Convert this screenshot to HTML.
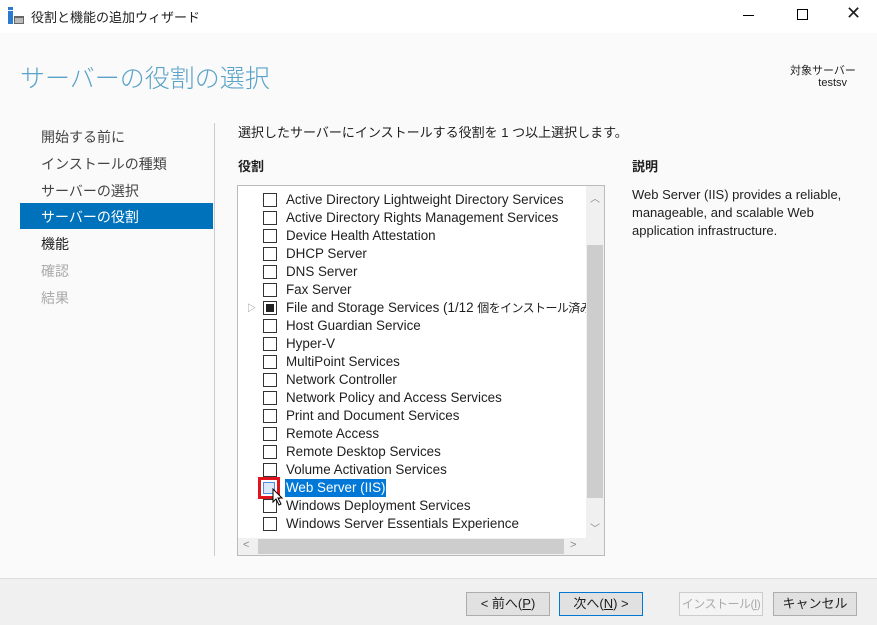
<!DOCTYPE html>
<html><head><meta charset="utf-8"><style>
*{margin:0;padding:0;box-sizing:border-box}
body{width:877px;height:625px;overflow:hidden;background:#fff;font-family:"Liberation Sans","Noto Sans CJK JP",sans-serif;font-size:13px;color:#1e1e1e;position:relative}
.a{position:absolute;white-space:nowrap}
.nav{position:absolute;left:41px;font-size:14px;color:#444;white-space:nowrap}
.row{position:absolute;left:286px;font-size:13.4px;color:#1e1e1e;white-space:nowrap}
.cb{position:absolute;left:263px;width:14px;height:14px;border:1px solid #333;background:#fff}
.btn{position:absolute;top:592px;height:24px;border:1px solid #adadad;background:#e1e1e1;font-size:13px;text-align:center;line-height:22px;white-space:nowrap;overflow:hidden}
</style></head><body>
<div class="a" style="left:0;top:0;width:877px;height:33px;background:#fff"></div>
<svg class="a" style="left:7px;top:7px" width="18" height="18"><rect x="1" y="0" width="5" height="3" fill="#2a7bd0"/><rect x="1" y="4" width="5" height="13" fill="#2a7bd0"/><rect x="7" y="9" width="10" height="8" fill="#666"/><rect x="8" y="11" width="8" height="5" fill="#bbb"/></svg>
<div class="a" style="left:31px;top:7px;font-size:13px">役割と機能の追加ウィザード</div>
<div class="a" style="left:743px;top:15px;width:11px;height:1px;background:#000"></div>
<div class="a" style="left:797px;top:9px;width:11px;height:11px;border:1px solid #000"></div>
<div class="a" style="left:846px;top:3px;font-size:18px">✕</div>
<div class="a" style="left:0;top:33px;width:877px;height:545px;background:#fafafa"></div>
<div class="a" style="left:20px;top:59px;font-size:25px;color:#5aa3c8;font-family:'Noto Sans CJK JP',sans-serif;font-weight:300">サーバーの役割の選択</div>
<div class="a" style="left:790px;top:62px;font-size:11px;text-align:right;width:57px">対象サーバー</div>
<div class="a" style="left:790px;top:77px;font-size:11px;text-align:right;width:57px">testsv</div>
<div class="nav" style="top:127px">開始する前に</div>
<div class="nav" style="top:154px">インストールの種類</div>
<div class="nav" style="top:181px">サーバーの選択</div>
<div class="a" style="left:20px;top:203px;width:193px;height:26px;background:#0072bc"></div>
<div class="nav" style="top:207px;color:#fff">サーバーの役割</div>
<div class="nav" style="top:234px;color:#222">機能</div>
<div class="nav" style="top:261px;color:#aaa">確認</div>
<div class="nav" style="top:288px;color:#aaa">結果</div>
<div class="a" style="left:214px;top:123px;width:1px;height:433px;background:#ccc"></div>
<div class="a" style="left:238px;top:122px;font-size:13px">選択したサーバーにインストールする役割を 1 つ以上選択します。</div>
<div class="a" style="left:238px;top:156px;font-size:13px;font-weight:bold">役割</div>
<div class="a" style="left:632px;top:156px;font-size:13px;font-weight:bold">説明</div>
<div class="a" style="left:632px;top:186px;font-size:13px;line-height:18px;white-space:normal;width:230px">Web Server (IIS) provides a reliable, manageable, and scalable Web application infrastructure.</div>
<div class="a" style="left:237px;top:185px;width:368px;height:371px;border:1px solid #bbb;background:#fff"></div>
<div class="a" style="left:586px;top:186px;width:18px;height:352px;background:#f0f0f0"></div>
<div class="a" style="left:587px;top:245px;width:16px;height:253px;background:#cdcdcd"></div>
<div class="a" style="left:590px;top:190px;font-size:10px;color:#888">︿</div>
<div class="a" style="left:590px;top:520px;font-size:10px;color:#888">﹀</div>
<div class="a" style="left:238px;top:538px;width:366px;height:17px;background:#f0f0f0"></div>
<div class="a" style="left:258px;top:539px;width:306px;height:15px;background:#cdcdcd"></div>
<div class="a" style="left:243px;top:539px;font-size:11px;color:#888">&lt;</div>
<div class="a" style="left:570px;top:539px;font-size:11px;color:#888">&gt;</div>
<div class="a" style="left:238px;top:186px;width:348px;height:345px;overflow:hidden">
<div style="position:relative;left:-238px;top:-186px">
<div class="cb" style="top:193px"></div><div class="row" style="top:192px">Active Directory Lightweight Directory Services</div>
<div class="cb" style="top:211px"></div><div class="row" style="top:210px">Active Directory Rights Management Services</div>
<div class="cb" style="top:229px"></div><div class="row" style="top:228px">Device Health Attestation</div>
<div class="cb" style="top:247px"></div><div class="row" style="top:246px">DHCP Server</div>
<div class="cb" style="top:265px"></div><div class="row" style="top:264px">DNS Server</div>
<div class="cb" style="top:283px"></div><div class="row" style="top:282px">Fax Server</div>
<div class="a" style="left:247px;top:301px;font-size:9px;color:#888">▷</div>
<div class="cb" style="top:301px"><div style="margin:2px;width:8px;height:8px;background:#222"></div></div><div class="row" style="top:300px;line-height:16px;height:18px">File and Storage Services (1/12 <span style="font-size:12px;letter-spacing:-0.6px">個をインストール済み</span>)</div>
<div class="cb" style="top:319px"></div><div class="row" style="top:318px">Host Guardian Service</div>
<div class="cb" style="top:337px"></div><div class="row" style="top:336px">Hyper-V</div>
<div class="cb" style="top:355px"></div><div class="row" style="top:354px">MultiPoint Services</div>
<div class="cb" style="top:373px"></div><div class="row" style="top:372px">Network Controller</div>
<div class="cb" style="top:391px"></div><div class="row" style="top:390px">Network Policy and Access Services</div>
<div class="cb" style="top:409px"></div><div class="row" style="top:408px">Print and Document Services</div>
<div class="cb" style="top:427px"></div><div class="row" style="top:426px">Remote Access</div>
<div class="cb" style="top:445px"></div><div class="row" style="top:444px">Remote Desktop Services</div>
<div class="cb" style="top:463px"></div><div class="row" style="top:462px">Volume Activation Services</div>
<div class="a" style="left:258px;top:477px;width:22px;height:22px;border:3px solid #e0141e"></div>
<div class="a" style="left:263px;top:482px;width:12px;height:12px;background:#dce9fb;border:1px solid #4a90e2"></div>
<div class="row" style="top:479px;left:285px;color:#fff;background:#0078d7;padding:1px 1px;line-height:16px">Web Server (IIS)</div>
<div class="cb" style="top:499px"></div><div class="row" style="top:498px">Windows Deployment Services</div>
<div class="cb" style="top:517px"></div><div class="row" style="top:516px">Windows Server Essentials Experience</div>
<svg class="a" style="left:272px;top:488px" width="12" height="18"><path d="M1 1 L1 14 L4 11 L7 17 L9 16 L6 10 L10 10 Z" fill="#fff" stroke="#000" stroke-width="1"/></svg>
</div></div>
<div class="a" style="left:0;top:578px;width:877px;height:47px;background:#f0f0f0;border-top:1px solid #dfdfdf"></div>
<div class="btn" style="left:466px;width:84px">&lt; 前へ(<u>P</u>)</div>
<div class="btn" style="left:559px;width:84px;border-color:#0078d7">次へ(<u>N</u>) &gt;</div>
<div class="btn" style="left:679px;width:84px;color:#aaa;background:#f4f4f4;border-color:#ccc;font-size:12px;letter-spacing:-0.5px">インストール(<u>I</u>)</div>
<div class="btn" style="left:773px;width:84px">キャンセル</div>
</body></html>
